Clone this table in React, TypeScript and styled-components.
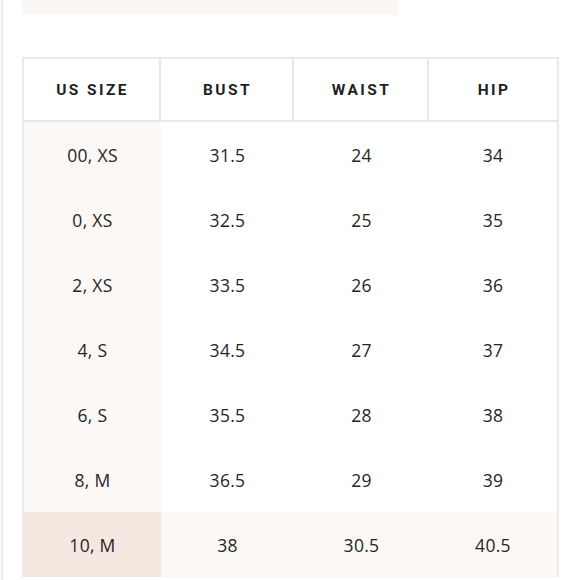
import React from "react";
import styled, { createGlobalStyle } from "styled-components";

const Global = createGlobalStyle`
  html, body { margin: 0; padding: 0; background: #ffffff; }
  body { font-family: "Open Sans", "Liberation Sans", sans-serif; }
`;

const Page = styled.div`
  width: 580px;
  height: 580px;
  overflow: hidden;
  box-sizing: border-box;
  border-left: 2px solid #ededed;
  margin-left: 1px;
  padding-left: 19px;
  display: flex;
  flex-direction: column;
  gap: 42px;
`;

const TopBar = styled.div`
  width: 376px;
  height: 15px;
  background: #faf7f4;
`;

const Table = styled.div`
  width: 537px;
  box-sizing: border-box;
  border-left: 2px solid #ebebeb;
  border-right: 2px solid #ebebeb;
  border-top: 2px solid #ebebeb;
  display: grid;
  grid-template-columns: 137px 133px 135px 128px;
`;

const HeadCell = styled.div<{ $last?: boolean }>`
  height: 63px;
  box-sizing: border-box;
  border-bottom: 2px solid #e8e8e8;
  border-right: ${(p) => (p.$last ? "none" : "2px solid #e8e8e8")};
  display: flex;
  align-items: center;
  justify-content: center;
  font-family: "Roboto", "Liberation Sans", Arial, sans-serif;
  font-weight: 700;
  font-size: 15.5px;
  letter-spacing: 2.4px;
  color: #1f1f1f;
  padding-left: 2px;
`;

const Cell = styled.div<{ $tone: "plain" | "soft" | "strong" }>`
  height: 65px;
  display: flex;
  align-items: center;
  justify-content: center;
  font-family: "Open Sans", "Liberation Sans", sans-serif;
  font-size: 17.5px;
  letter-spacing: 0.3px;
  color: #262626;
  background: ${(p) =>
    p.$tone === "strong" ? "#f4e8e1" : p.$tone === "soft" ? "#fbf8f5" : "#ffffff"};
`;

const headers = ["US SIZE", "BUST", "WAIST", "HIP"];
const rows = [
  ["00, XS", "31.5", "24", "34"],
  ["0, XS", "32.5", "25", "35"],
  ["2, XS", "33.5", "26", "36"],
  ["4, S", "34.5", "27", "37"],
  ["6, S", "35.5", "28", "38"],
  ["8, M", "36.5", "29", "39"],
  ["10, M", "38", "30.5", "40.5"],
];
const highlight = 6;

export default function App() {
  return (
    <>
      <Global />
      <Page>
        <TopBar />
        <Table>
          {headers.map((h, i) => (
            <HeadCell key={h} $last={i === headers.length - 1}>
              {h}
            </HeadCell>
          ))}
          {rows.map((r, ri) =>
            r.map((v, ci) => {
              const tone =
                ri === highlight ? (ci === 0 ? "strong" : "soft") : ci === 0 ? "soft" : "plain";
              return (
                <Cell key={`${ri}-${ci}`} $tone={tone}>
                  {v}
                </Cell>
              );
            })
          )}
        </Table>
      </Page>
    </>
  );
}
